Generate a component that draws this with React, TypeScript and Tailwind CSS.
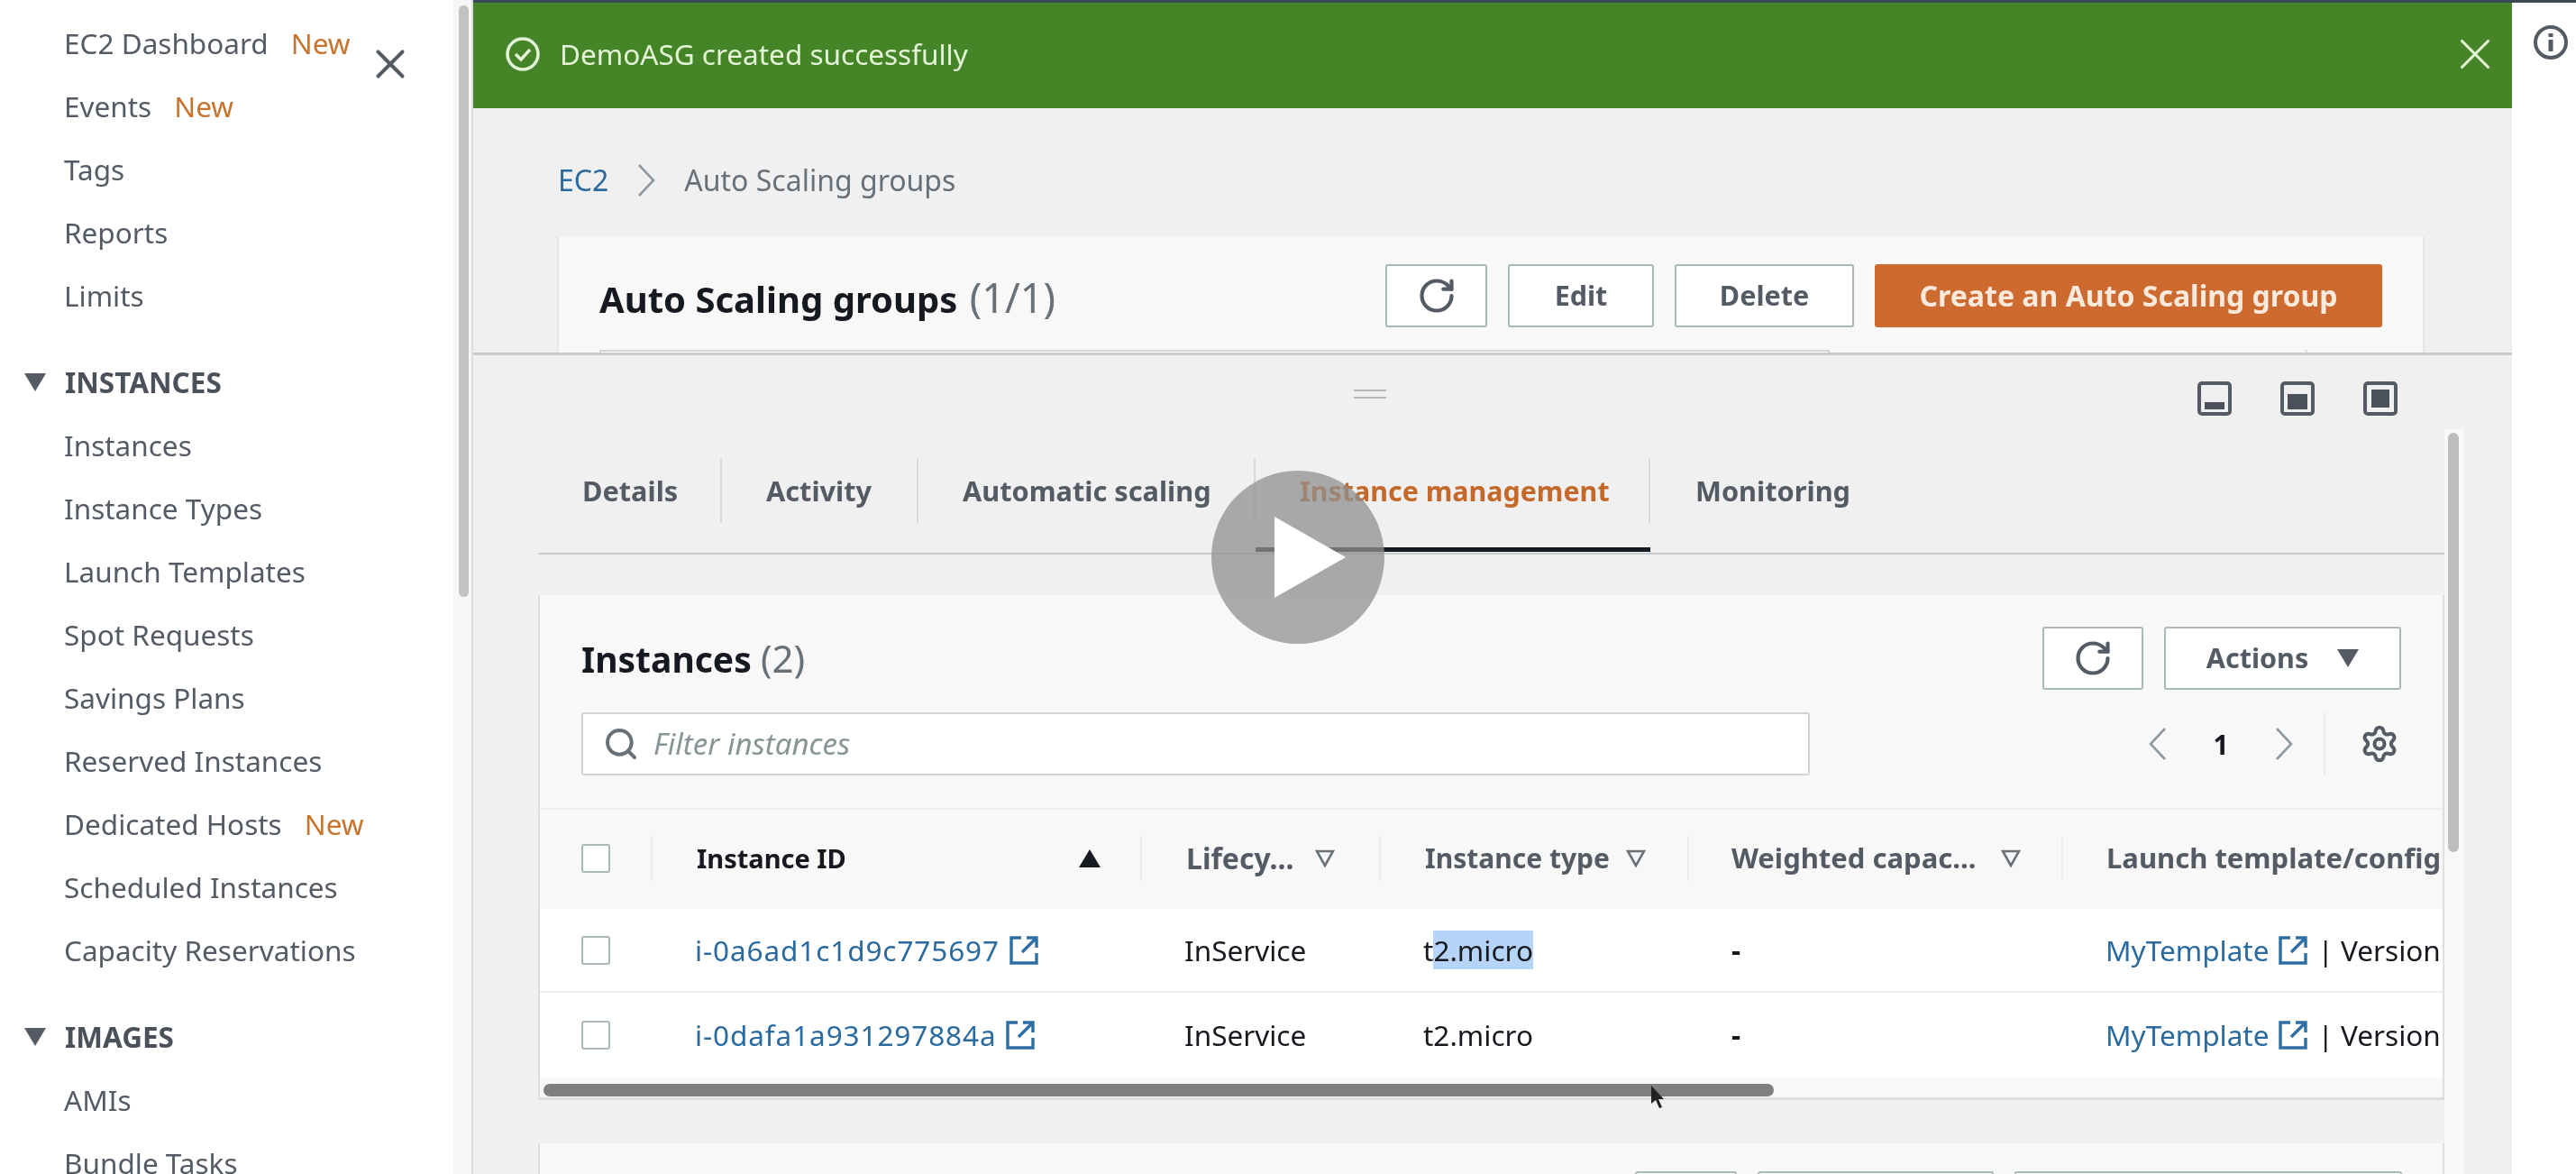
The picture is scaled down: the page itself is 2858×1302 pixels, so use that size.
import { Search, X, RotateCw, Settings } from "lucide-react";

const font = "font-['Noto_Sans',sans-serif]";

function Tri({ className = "" }: { className?: string }) {
  return (
    <svg width="24" height="20" viewBox="0 0 24 20" className={className}>
      <path d="M0 0h24L12 20z" fill="#545b64" />
    </svg>
  );
}

function Chevron({ flip }: { flip?: boolean }) {
  return (
    <svg width="22" height="38" viewBox="0 0 22 38" fill="none" stroke="#8d9aa0" strokeWidth="2.6" className={flip ? "rotate-180" : ""}>
      <path d="M19 2 3 19l16 17" />
    </svg>
  );
}

function NavItem({ label, isNew }: { label: string; isNew?: boolean }) {
  return (
    <div className="h-[70px] pl-[71px] flex items-center gap-[25px] text-[31.5px] text-[#545b64]">
      <span>{label}</span>
      {isNew && <span className="text-[#c7742f]">New</span>}
    </div>
  );
}

function NavHead({ label }: { label: string }) {
  return (
    <div className="mt-[26px] h-[70px] pl-[27px] flex items-center gap-[21px] text-[31.5px] font-bold text-[#4b515b]">
      <Tri />
      <span>{label}</span>
    </div>
  );
}

function Sidebar() {
  return (
    <aside className="relative w-[525px] shrink-0 h-full flex bg-white">
      <div className="w-[503px] pt-[13px]">
        {["EC2 Dashboard", "Events", "Tags", "Reports", "Limits"].map((l, i) => (
          <NavItem key={l} label={l} isNew={i < 2} />
        ))}
        <NavHead label="INSTANCES" />
        {["Instances", "Instance Types", "Launch Templates", "Spot Requests", "Savings Plans", "Reserved Instances"].map((l) => (
          <NavItem key={l} label={l} />
        ))}
        <NavItem label="Dedicated Hosts" isNew />
        <NavItem label="Scheduled Instances" />
        <NavItem label="Capacity Reservations" />
        <NavHead label="IMAGES" />
        <NavItem label="AMIs" />
        <NavItem label="Bundle Tasks" />
      </div>
      <div className="w-[22px] bg-[#f6f6f6] border-r-2 border-[#dddddd] pl-[6px] pt-[6px]">
        <div className="w-[11px] h-[656px] rounded-full bg-[#c2c2c2]" />
      </div>
      <X className="absolute left-[406px] top-[44px] text-[#545b64]" size={54} strokeWidth={1.8} />
    </aside>
  );
}

function OutlineBtn({ children, className = "" }: { children: React.ReactNode; className?: string }) {
  return (
    <div className={`h-[70px] flex items-center justify-center bg-white border-2 border-[#aab7b8] rounded-[3px] font-bold text-[30.5px] text-[#545b64] ${className}`}>
      {children}
    </div>
  );
}

function ExtLink({ className = "" }: { className?: string }) {
  return (
    <svg width="34" height="34" viewBox="0 0 34 34" fill="none" stroke="#2d6fa5" strokeWidth="3.4" className={className}>
      <path d="M14 3H3v28h28V20" />
      <path d="M20 3h11v11M31 3 15 19" />
    </svg>
  );
}

function Sort() {
  return (
    <svg width="22" height="20" viewBox="0 0 22 20" fill="none" stroke="#687078" strokeWidth="2.6">
      <path d="M2 2h18l-9 16z" />
    </svg>
  );
}

function Checkbox() {
  return <div className="w-[32px] h-[32px] rounded-[3px] bg-white border-2 border-[#aab7b8]" />;
}

function PanelIcon({ fill }: { fill: string }) {
  return (
    <svg width="38" height="38" viewBox="0 0 38 38">
      <rect x="2" y="2" width="34" height="34" rx="3" fill="none" stroke="#545b64" strokeWidth="4" />
      <path d={fill} fill="#4b515b" />
    </svg>
  );
}

function Row({ id, type, h }: { id: string; type: React.ReactNode; h: string }) {
  return (
    <div className={`${h} flex items-center bg-white text-[31.5px] text-[#16191f] whitespace-nowrap overflow-hidden`}>
      <div className="w-[125px] pl-[46px] shrink-0">
        <Checkbox />
      </div>
      <div className="w-[543px] shrink-0 pl-[47px] flex items-center gap-[10px] text-[#2a6a9e]">
        <span className="tracking-[0.9px]">{id}</span>
        <ExtLink />
      </div>
      <div className="w-[265px] shrink-0 pl-[47px]">InService</div>
      <div className="w-[342px] shrink-0 pl-[47px]">{type}</div>
      <div className="w-[415px] shrink-0 pl-[47px] font-bold">-</div>
      <div className="pl-[47px] flex items-center gap-[10px]">
        <span className="text-[#2a6a9e]">MyTemplate</span>
        <ExtLink />
        <span>| Version</span>
      </div>
    </div>
  );
}

export default function App() {
  return (
    <div className={`relative w-[2858px] h-[1302px] overflow-hidden bg-white flex blur-[0.7px] ${font}`}>
      <div className="absolute inset-x-0 top-0 h-[3px] bg-[#3a4a55]" />
      <Sidebar />

      <main className="w-[2262px] shrink-0 h-full flex flex-col bg-[#f0f0f0]">
        {/* top half */}
        <div className="h-[394px] shrink-0 overflow-hidden border-b-[3px] border-[#c5cdcc]">
          <div className="h-[120px] bg-[#468428] pl-[34px] pr-[12px] flex items-center gap-[20px] text-[31.5px] text-[#e3f4d7]">
            <svg width="42" height="42" viewBox="0 0 42 42" fill="none" stroke="#e3f4d7" strokeWidth="3.5">
              <circle cx="21" cy="21" r="17" />
              <path d="m13 21 6 6 10-11" />
            </svg>
            <span className="flex-1">DemoASG created successfully</span>
            <X size={58} strokeWidth={1.3} />
          </div>
          <div className="h-[142px] pl-[94px] pt-[18px] flex items-center text-[32px]">
            <span className="text-[#2a6a9e]">EC2</span>
            <svg width="22" height="38" viewBox="0 0 22 38" fill="none" stroke="#8d9aa0" strokeWidth="2.6" className="mx-[31px]">
              <path d="m3 2 16 17L3 36" />
            </svg>
            <span className="text-[#687078]">Auto Scaling groups</span>
          </div>
          <div className="ml-[93px] w-[2072px] h-[130px] bg-[#f8f8f8] border-x-2 border-[#e6e6e6] flex flex-col">
            <div className="pl-[45px] pr-[45px] pt-[31px] flex items-start">
              <div className="flex-1 text-[40px] font-bold text-[#16191f] pt-[12px] leading-[50px]">
                Auto Scaling groups <span className="ml-[3px] font-normal text-[45px] text-[#687078]">(1/1)</span>
              </div>
              <div className="flex gap-[23px]">
                <OutlineBtn className="w-[113px]">
                  <RotateCw size={44} strokeWidth={2.3} />
                </OutlineBtn>
                <OutlineBtn className="w-[162px]">Edit</OutlineBtn>
                <OutlineBtn className="w-[199px]">Delete</OutlineBtn>
                <div className="w-[563px] h-[70px] flex items-center justify-center rounded-[3px] bg-[#cc6a2f] text-[#fbeadc] font-bold text-[32px]">
                  Create an Auto Scaling group
                </div>
              </div>
            </div>
            {/* next row, cut by the split panel */}
            <div className="mt-[25px] ml-[45px] flex">
              <div className="w-[1365px] h-[20px] bg-white border-2 border-[#cfd4d4]" />
              <div className="ml-auto mr-[128px] w-[2px] h-[20px] bg-[#e2e2e2]" />
            </div>
          </div>
        </div>

        {/* split panel */}
        <div className="flex-1 relative pl-[72px] pr-[75px]">
          <div className="h-[60px] pt-[38px] pl-[905px]">
            <div className="w-[36px] h-[10px] border-y-2 border-[#b5b5b5]" />
          </div>
          <div className="absolute right-[127px] top-[29px] flex gap-[54px]">
            <PanelIcon fill="M8 23h22v8H8z" />
            <PanelIcon fill="M8 14h22v17H8z" />
            <PanelIcon fill="M9 9h20v20H9z" />
          </div>

          <div className="mt-[27px] h-[134px] border-b-2 border-[#c5cdcc] flex items-start pt-[28px] font-bold text-[30.7px] text-[#545b64]">
            <div className="w-[204px] pl-[49px] flex items-center border-r-2 border-[#d5dbdb] h-[71px]">Details</div>
            <div className="w-[218px] pl-[49px] flex items-center border-r-2 border-[#d5dbdb] h-[71px]">Activity</div>
            <div className="w-[374px] pl-[49px] flex items-center border-r-2 border-[#d5dbdb] h-[71px]">Automatic scaling</div>
            <div className="relative w-[438px] pl-[49px] flex items-center border-r-2 border-[#d5dbdb] text-[30.4px] text-[#c4692a] h-[71px]">
              Instance management
              <div className="absolute left-0 right-[-2px] top-[98px] h-[5px] bg-[#16191f]" />
            </div>
            <div className="pl-[50px] flex items-center h-[71px]">Monitoring</div>
          </div>

          <section className="mt-[45px] bg-[#f8f8f8] border-x-2 border-b-[3px] border-[#dedede] h-[560px] flex flex-col">
            <div className="pl-[46px] pr-[46px] pt-[35px] flex items-start">
              <div className="flex-1 text-[39px] font-bold text-[#16191f] leading-[70px]">
                Instances <span className="font-normal text-[42px] text-[#687078]">(2)</span>
              </div>
              <div className="flex gap-[23px]">
                <OutlineBtn className="w-[112px]">
                  <RotateCw size={44} strokeWidth={2.3} />
                </OutlineBtn>
                <OutlineBtn className="w-[263px] gap-[32px]">
                  Actions <Tri />
                </OutlineBtn>
              </div>
            </div>
            <div className="pl-[46px] pr-[48px] mt-[24px] flex items-center">
              <div className="w-[1363px] h-[70px] bg-white border-2 border-[#cfd4d4] rounded-[3px] flex items-center pl-[22px] gap-[16px] text-[33px] italic text-[#879596]">
                <Search className="text-[#687078]" size={40} strokeWidth={2.4} />
                Filter instances
              </div>
              <div className="flex-1 flex justify-end items-center">
                <Chevron />
                <span className="w-[118px] text-center text-[30px] font-bold text-[#16191f]">1</span>
                <Chevron flip />
                <div className="ml-[33px] pl-[38px] h-[70px] border-l-2 border-[#eaeded] flex items-center">
                  <Settings className="text-[#545b64]" size={44} strokeWidth={2.2} />
                </div>
              </div>
            </div>

            <div className="mt-[36px] border-t-2 border-[#eeeeee] h-[112px] pb-[3px] flex items-center text-[30px] font-bold text-[#545b64] whitespace-nowrap overflow-hidden">
              <div className="w-[125px] pl-[46px] h-[50px] flex items-center shrink-0 border-r-2 border-[#eaeded]">
                <Checkbox />
              </div>
              <div className="w-[543px] shrink-0 h-[50px] border-r-2 border-[#eaeded] flex items-center justify-between pr-[44px] pl-[49px] text-[29px] text-[#16191f]">
                Instance ID
                <svg width="24" height="20" viewBox="0 0 24 20"><path d="M12 0 24 20H0z" fill="#16191f" /></svg>
              </div>
              <div className="w-[265px] shrink-0 h-[50px] border-r-2 border-[#eaeded] flex items-center gap-[24px] pl-[49px] text-[32px]">
                Lifecy... <Sort />
              </div>
              <div className="w-[342px] shrink-0 h-[50px] border-r-2 border-[#eaeded] flex items-center gap-[18px] pl-[49px]">
                Instance type <Sort />
              </div>
              <div className="w-[415px] shrink-0 h-[50px] border-r-2 border-[#eaeded] flex items-center gap-[28px] pl-[47px] text-[31px]">
                Weighted capac... <Sort />
              </div>
              <div className="pl-[48px] text-[31px]">Launch template/config</div>
            </div>
            <Row h="h-[93px] border-b-2 border-[#eaeded]" id="i-0a6ad1c1d9c775697" type={<span>t<span className="bg-[#b5d4f7]">2.micro</span></span>} />
            <Row h="h-[94px]" id="i-0dafa1a931297884a" type="t2.micro" />
            <div className="flex-1 bg-[#f8f8f8] pl-[4px] pt-[7px]">
              <div className="w-[1365px] h-[14px] rounded-full bg-[#7f7f7f]" />
            </div>
          </section>
          <div className="mt-[48px] h-[100px] bg-[#f8f8f8] border-x-2 border-[#dedede] flex justify-end gap-[23px] pt-[31px] pr-[45px]">
            <div className="w-[113px] h-[60px] bg-white border-2 border-[#aab7b8] rounded-[3px]" />
            <div className="w-[262px] h-[60px] bg-white border-2 border-[#aab7b8] rounded-[3px]" />
            <div className="w-[430px] h-[60px] bg-white border-2 border-[#aab7b8] rounded-[3px]" />
          </div>

          {/* split panel scrollbar */}
          <div className="absolute right-[53px] top-[82px] bottom-0 w-[22px] bg-[#f8f8f8] pl-[4px] pt-[4px]">
            <div className="w-[12px] h-[465px] rounded-full bg-[#bdbdbd]" />
          </div>
        </div>
      </main>

      <div className="flex-1 bg-white pt-[27px] pl-[23px]">
        <svg width="40" height="40" viewBox="0 0 40 40" fill="none" stroke="#545b64">
          <circle cx="20" cy="20" r="17" strokeWidth="4" />
          <path d="M20 10v4M20 17v13" strokeWidth="5" />
        </svg>
      </div>

      {/* video play overlay */}
      <div className="absolute left-[1344px] top-[522px] w-[192px] h-[192px] rounded-full bg-[#909090]/75 flex items-center justify-center">
        <svg width="79" height="90" viewBox="0 0 79 90" className="ml-[26px]"><path d="M0 0 79 45 0 90z" fill="#fff" /></svg>
      </div>
      {/* mouse cursor */}
      <svg width="18" height="28" viewBox="0 0 18 28" className="absolute left-[1830px] top-[1204px]">
        <path d="M2 0v20l5-4 4 9 3-1-4-9h6z" fill="#222" />
      </svg>
    </div>
  );
}
